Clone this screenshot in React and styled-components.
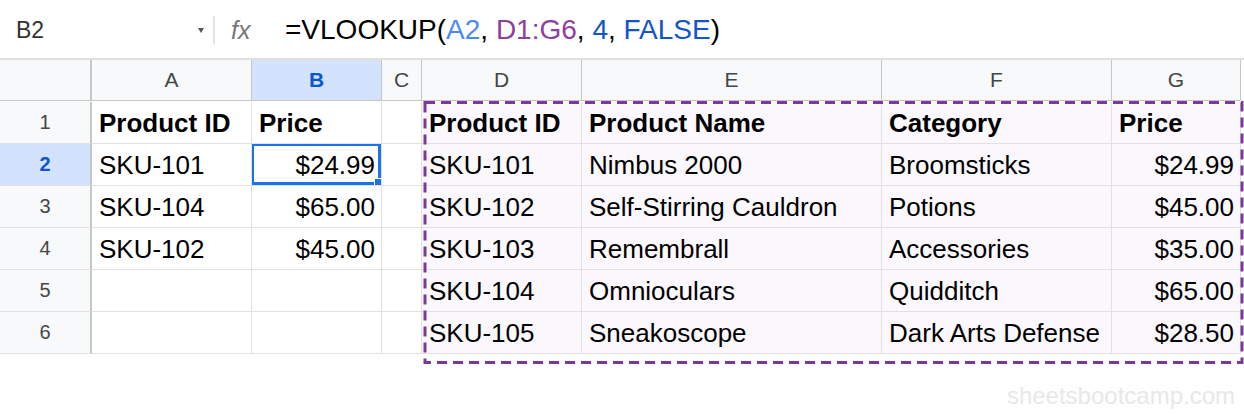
import React from "react";
import styled, { createGlobalStyle } from "styled-components";

const columns = [
  { key: "A", width: 92 },
  { key: "B", width: 160 },
  { key: "C", width: 130 },
  { key: "D", width: 40 },
  { key: "E", width: 160 },
  { key: "F", width: 300 },
  { key: "G", width: 230 },
  { key: "H", width: 129 },
];

const letters = ["A", "B", "C", "D", "E", "F", "G"];

const rows = [
  ["Product ID", "Price", "", "Product ID", "Product Name", "Category", "Price"],
  ["SKU-101", "$24.99", "", "SKU-101", "Nimbus 2000", "Broomsticks", "$24.99"],
  ["SKU-104", "$65.00", "", "SKU-102", "Self-Stirring Cauldron", "Potions", "$45.00"],
  ["SKU-102", "$45.00", "", "SKU-103", "Remembrall", "Accessories", "$35.00"],
  ["", "", "", "SKU-104", "Omnioculars", "Quidditch", "$65.00"],
  ["", "", "", "SKU-105", "Sneakoscope", "Dark Arts Defense", "$28.50"],
];

const rightAligned = [1, 6];

const GlobalStyle = createGlobalStyle`
  body {
    margin: 0;
    background: #ffffff;
    font-family: "Liberation Sans", Arial, sans-serif;
  }
`;

const Page = styled.div`
  width: 1244px;
  height: 414px;
  overflow: hidden;
  background: #ffffff;
`;

const FormulaBar = styled.div`
  display: flex;
  align-items: center;
  height: 60px;
  padding-top: 2px;
  box-sizing: border-box;
  border-bottom: 2px solid #e0e0e0;
`;

const NameBox = styled.div`
  display: flex;
  align-items: center;
  justify-content: space-between;
  width: 188px;
  padding: 0 9px 0 16px;
  font-size: 23px;
  color: #333333;
`;

const Caret = styled.span`
  width: 0;
  height: 0;
  border-left: 3px solid transparent;
  border-right: 3px solid transparent;
  border-top: 5px solid #555555;
`;

const Divider = styled.div`
  width: 2px;
  height: 28px;
  background: #e3e3e3;
`;

const Fx = styled.div`
  width: 70px;
  padding-left: 16px;
  font-size: 25px;
  font-style: italic;
  color: #777777;
  box-sizing: border-box;
`;

const Formula = styled.div`
  font-size: 28px;
  color: #000000;
`;

const Ref = styled.span`
  color: ${(p) => p.$color};
`;

const GridWrap = styled.div`
  position: relative;
`;

const Grid = styled.div`
  display: grid;
  grid-template-columns: ${columns.map((c) => `${c.width}px`).join(" ")};
  grid-auto-rows: 42px;
  width: 1241px;
`;

const ColHeader = styled.div`
  display: flex;
  align-items: center;
  justify-content: center;
  height: 41px;
  font-size: 21px;
  color: ${(p) => (p.$active ? "#0b57d0" : "#444746")};
  font-weight: ${(p) => (p.$active ? 700 : 400)};
  background: ${(p) => (p.$active ? "#d3e3fd" : "#f8f9fa")};
  border-right: 1px solid #c4c7c5;
  border-bottom: 1px solid #c4c7c5;
  box-sizing: border-box;
  grid-row: 1;
`;

const Corner = styled(ColHeader)`
  border-right: 2px solid #c4c7c5;
`;

const RowHeader = styled.div`
  display: flex;
  align-items: center;
  justify-content: center;
  font-size: 20px;
  color: ${(p) => (p.$active ? "#0b57d0" : "#444746")};
  font-weight: ${(p) => (p.$active ? 700 : 400)};
  background: ${(p) => (p.$active ? "#d3e3fd" : "#f8f9fa")};
  border-right: 2px solid #c4c7c5;
  border-bottom: 1px solid #e1e1e1;
  box-sizing: border-box;
`;

const Cell = styled.div`
  position: relative;
  display: flex;
  align-items: center;
  justify-content: ${(p) => (p.$right ? "flex-end" : "flex-start")};
  padding: 2px 6px 0 7px;
  font-size: 26px;
  font-weight: ${(p) => (p.$bold ? 700 : 400)};
  color: #000000;
  white-space: nowrap;
  overflow: hidden;
  background: ${(p) => (p.$range ? "#faf8fc" : "#ffffff")};
  border-right: 1px solid #e1e1e1;
  border-bottom: 1px solid #e1e1e1;
  box-sizing: border-box;
`;

const Selection = styled.div`
  position: absolute;
  inset: -1px 0 0 -1px;
  border: 3px solid #1a73e8;
  pointer-events: none;
`;

const Handle = styled.div`
  position: absolute;
  right: -4px;
  bottom: -4px;
  width: 6px;
  height: 6px;
  background: #1a73e8;
  border: 1px solid #ffffff;
`;

const RangeOutline = styled.svg`
  position: absolute;
  left: 423px;
  top: 41px;
  pointer-events: none;
`;

const Watermark = styled.div`
  padding: 28px 9px 0 0;
  text-align: right;
  font-size: 24px;
  color: #e8e8e8;
`;

export default function App() {
  return (
    <Page>
      <GlobalStyle />
      <FormulaBar>
        <NameBox>
          B2
          <Caret />
        </NameBox>
        <Divider />
        <Fx>fx</Fx>
        <Formula>
          =VLOOKUP(<Ref $color="#4a8af4">A2</Ref>,{" "}
          <Ref $color="#8e3fa0">D1:G6</Ref>, <Ref $color="#1155cc">4</Ref>,{" "}
          <Ref $color="#1155cc">FALSE</Ref>)
        </Formula>
      </FormulaBar>
      <GridWrap>
        <Grid>
          <Corner />
          {letters.map((l) => (
            <ColHeader key={l} $active={l === "B"}>
              {l}
            </ColHeader>
          ))}
          {rows.map((row, r) => (
            <React.Fragment key={r}>
              <RowHeader $active={r === 1}>{r + 1}</RowHeader>
              {row.map((value, c) => (
                <Cell
                  key={c}
                  $bold={r === 0}
                  $right={r > 0 && rightAligned.includes(c)}
                  $range={c >= 3}
                >
                  {value}
                  {r === 1 && c === 1 && (
                    <Selection>
                      <Handle />
                    </Selection>
                  )}
                </Cell>
              ))}
            </React.Fragment>
          ))}
        </Grid>
        <RangeOutline width="821" height="264" viewBox="0 0 821 264">
          <rect
            x="2"
            y="1.5"
            width="817"
            height="260"
            fill="none"
            stroke="#7b3a99"
            strokeWidth="3"
            strokeDasharray="10 6"
          />
        </RangeOutline>
      </GridWrap>
      <Watermark>sheetsbootcamp.com</Watermark>
    </Page>
  );
}
